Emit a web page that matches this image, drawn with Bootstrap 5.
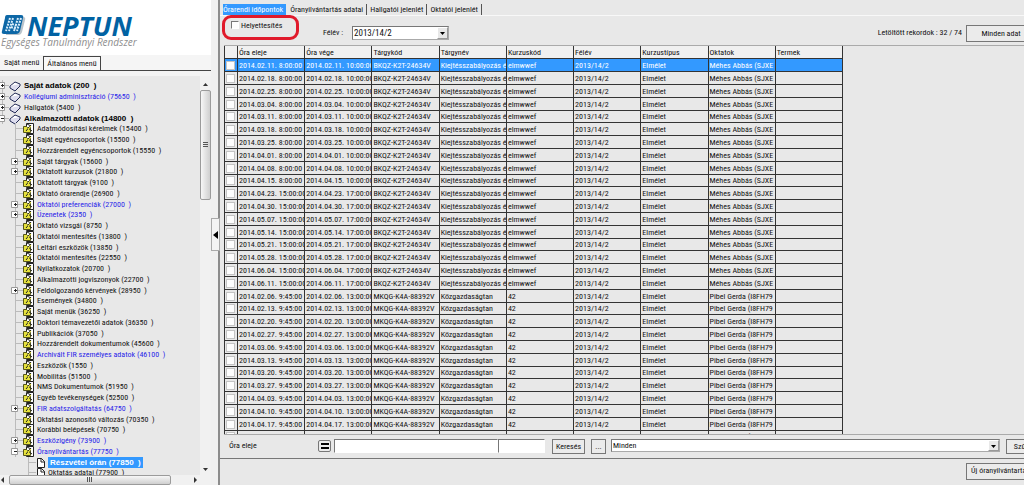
<!DOCTYPE html>
<html lang="hu">
<head>
<meta charset="utf-8">
<meta name="viewport" content="width=device-width, initial-scale=1">
<title>Neptun – Részvétel órán</title>
<link href="https://cdn.jsdelivr.net/npm/bootstrap@5.3.0/dist/css/bootstrap.min.css" rel="stylesheet">
<style>
:root { --face:#e8e8e8; --sel:#3399ff; --line:#777; --ink:#111; }
body { font-family:"Roboto Condensed","Liberation Sans",Arial,sans-serif; font-size:8px; line-height:10px; background:var(--face); color:var(--ink); }
button,input,select { font:inherit; color:inherit; border-radius:0; }
a { color:inherit; text-decoration:none; }
.side { width:211px; }
.logo { height:58px; padding:15px 0 0 1px; }
.logo-word { font:italic 700 27px/20px "Open Sans",sans-serif; color:#0062a3; }
.logo-sub { font:italic 10px/13px "Open Sans",sans-serif; color:#8f8f8f; white-space:nowrap; }
.side-tabs { background:#f5f5f5; height:17px; border-bottom:1px solid #444; margin-top:-3px; padding-left:1px; }
.side-tabs button { border:0; background:none; padding:0 3px; height:14px; }
.side-tabs button.active { border:1px solid #444; border-bottom:0; background:#f8f8f8; padding:0 3px; margin-left:1px; }
.strip { background:#f3f3f3; height:5px; }
.pane { min-height:0; }
.tree { padding-top:4px; }
.tree li { height:11px; line-height:11px; white-space:pre; display:flex; align-items:center; }
.tree li:nth-child(4n) { height:10px; }
.tree svg { flex:none; overflow:visible; }
.tree .strong { font-weight:700; font-family:"Liberation Sans",sans-serif; color:#000; }
.tree .blue { color:#2a1fe8; }
.twig { width:24px; height:11px; }
.branch { margin-left:13px; }
.leaf { margin-left:24px; }
.picked { background:var(--sel); color:#fff; font-weight:700; font-family:"Liberation Sans",sans-serif; padding:0 2px; }
.vbar { width:11px; background:#f1f1f1; }
.vthumb { height:110px; border:1px solid #9b9b9b; border-radius:2px; background:linear-gradient(90deg,#f7f7f7,#cfcfcf); }
.hbar { height:10px; background:#f1f1f1; padding-right:11px; }
.hthumb { width:162px; border:1px solid #9b9b9b; border-radius:2px; background:linear-gradient(#f7f7f7,#cfcfcf); }
.split { width:9px; background:#f0f0f0; border-right:2px solid #8c8c8c; padding-top:218px; }
.split button { width:9px; height:33px; border:1px solid #aaa; background:#f4f4f4; padding:0; display:block; }
.tabs { height:16px; border-bottom:1px solid #f8f8f8; padding:4px 0 0 3px; }
.tabs button { border:0; border-right:1px solid #555; background:none; padding:0 3px; height:11px; line-height:11px; margin-bottom:1px; }
.tabs button.active { background:var(--sel); color:#fff; padding:0 3px 0 0; border-color:var(--face); }
.filter { height:30px; padding-left:2px; }
.ring { width:77px; height:25px; border:3px solid #e01a2b; border-radius:9px; padding:3px 0 0 6px; margin-top:-1px; }
.box { appearance:none; width:9px; height:9px; margin:0; background:#fdfdfd; border:1px solid #c4c4c4; display:block; }
.ring .box { border-color:#777 #fff #fff #777; width:8px; height:8px; }
.ring label { padding-left:2px; }
.caption { margin-top:12px; white-space:nowrap; }
.combo { border:1px solid #777; border-right-color:#aaa; border-bottom-color:#aaa; background:#fff; flex:none; }
.combo select { appearance:none; border:0; background:none; padding:0 1px; outline:0; }
.combo span { width:11px; background:var(--face); border:1px solid #999; border-top-color:#fff; border-left-color:#fff; }
.btn3d { border:1px solid #777; background:#ebebeb; padding:0; white-space:nowrap; flex:none; }
.gridbox { border-top:1px solid #aaa; border-bottom:1px solid #aaa; margin-left:4px; }
.records { table-layout:fixed; width:619px; border-collapse:collapse; margin-top:-1px; }
.records th,.records td { border:1px solid #333; padding:0 0 0 1px; height:13px; line-height:11px; font-weight:400; overflow:hidden; white-space:nowrap; }
.records th { background:#f0f0f0; text-align:left; }
.records tbody tr:nth-child(5n) td { height:12px; line-height:10px; }
.records tr.on td { background:var(--sel); color:#fff; }
.records .pick { width:13px; }
.search { height:24px; padding:3px 0 0 9px; border-bottom:1px solid #777; }
.field { border:1px solid #fff; border-top-color:#777; border-left-color:#777; background:#fff; height:14px; padding:0 2px; margin-top:1px; }
.foot { height:27px; padding-top:4px; }
.term-label { width:28px; margin-left:24px; }
.term-box { width:97px; height:14px; margin:10px 0 0 1px; font-size:9px; }
.all-btn { width:70px; height:17px; margin:9px -12px 0 0; }
.q-label { width:89px; padding-top:3px; }
.eq-btn { width:13px; height:12px; margin:2px 3px 0 0; border-radius:2px; }
.q-one { width:164px; }
.q-two { width:47px; }
.find-btn { width:33px; height:15px; margin:1px 6px 0 7px; }
.more-btn { width:15px; height:15px; margin:1px 5px 0 0; }
.combo.all-box { height:13px; margin-top:1px; flex:1 1 auto; }
.sieve-btn { width:37px; height:15px; margin:1px -19px 0 6px; }
.new-btn { width:69px; height:17px; margin-right:-11px; }
</style>
</head>
<body class="vh-100 d-flex overflow-hidden">
<aside class="side d-flex flex-column flex-shrink-0">
  <header class="logo bg-white">
    <div class="d-flex align-items-center">
      <svg width="26" height="21" viewBox="0 0 26 21" aria-hidden="true">
        <path d="M7 2h15q3 0 2 3l-3 12q-1 3-4 3H5z" fill="#b9c3cb"/>
        <path d="M6 0h14q3 0 2 3l-3 13q-1 3-4 3H3q-3 0-2-3L4 3q0-3 2-3z" fill="#0d67a6"/>
        <path d="M9 3L5 16M12 3L8 16M11 9l6 2M10 12l5 2M17 3l-4 13M20 3l-4 13" stroke="#d9edfa" stroke-width="2" stroke-dasharray="2 1" fill="none"/>
      </svg>
      <span class="logo-word">NEPTUN</span>
    </div>
    <div class="logo-sub">Egységes Tanulmányi Rendszer</div>
  </header>
  <nav class="side-tabs d-flex align-items-end"><button type="button">Saját menü</button><button type="button" class="active">Általános menü</button></nav>
  <div class="strip"></div>
  <div class="pane d-flex flex-grow-1 overflow-hidden">
    <ul class="tree list-unstyled mb-0 flex-grow-1 overflow-hidden" id="tree"></ul>
    <div class="vbar d-flex flex-column">
      <svg width="11" height="14" aria-hidden="true"><path d="M3 10l2.500-3 2.500 3z" fill="#333"/></svg>
      <div class="vthumb d-flex align-items-center justify-content-center"><svg width="5" height="6"><path d="M0 .5h5M0 2.500h5M0 4.500h5" stroke="#555"/></svg></div>
      <svg class="mt-auto" width="11" height="9" aria-hidden="true"><path d="M3 2l2.500 3L8 2z" fill="#333"/></svg>
    </div>
  </div>
  <div class="hbar d-flex align-items-stretch">
    <svg width="9" height="10" aria-hidden="true"><path d="M4 2L1 5l3 3z" fill="#333"/></svg>
    <div class="hthumb d-flex align-items-center justify-content-center"><svg width="6" height="5"><path d="M.5 0v5M2.500 0v5M4.500 0v5" stroke="#555"/></svg></div>
    <svg class="ms-auto" width="9" height="10" aria-hidden="true"><path d="M3 2l3 3-3 3z" fill="#333"/></svg>
  </div>
</aside>
<div class="split flex-shrink-0"><button type="button" aria-label="Menü elrejtése"><svg width="7" height="31" class="d-block"><path d="M6 12v8L1 16z" fill="#000"/></svg></button></div>
<main class="flex-grow-1 d-flex flex-column overflow-hidden">
  <nav class="tabs d-flex">
    <button type="button" class="active">Órarendi időpontok</button><button type="button">Óranyilvántartás adatai</button><button type="button">Hallgatói jelenlét</button><button type="button">Oktatói jelenlét</button>
  </nav>
  <div class="filter d-flex">
    <div class="ring d-flex flex-shrink-0"><input class="box" type="checkbox" id="subst"><label for="subst">Helyettesítés</label></div>
    <label class="caption term-label" for="term">Félév :</label>
    <div class="combo d-flex term-box"><select id="term" class="flex-grow-1"><option>2013/14/2</option></select><span class="d-flex"><svg width="9" height="10"><path d="M2 4h5L4.500 7z" fill="#000"/></svg></span></div>
    <div class="caption ms-auto pe-1">Letöltött rekordok : 32 / 74</div>
    <button type="button" class="btn3d all-btn">Minden adat</button>
  </div>
  <div class="gridbox flex-grow-1 overflow-hidden">
    <table class="records">
      <colgroup><col class="pick"><col><col><col><col><col><col><col><col><col></colgroup>
      <thead><tr><th></th><th>Óra eleje</th><th>Óra vége</th><th>Tárgykód</th><th>Tárgynév</th><th>Kurzuskód</th><th>Félév</th><th>Kurzustípus</th><th>Oktatok</th><th>Termek</th></tr></thead>
      <tbody id="rows"></tbody>
    </table>
  </div>
  <form class="search d-flex align-items-start">
    <label for="q1" class="q-label">Óra eleje</label>
    <button type="button" class="btn3d eq-btn" aria-label="Egyenlő"><svg width="10" height="10" class="d-block mx-auto"><path d="M1 3h8M1 7h8" stroke="#000" stroke-width="2"/></svg></button>
    <input id="q1" class="field q-one" type="text"><input class="field q-two" type="text" aria-label="Óra eleje, vég">
    <button type="button" class="btn3d find-btn">Keresés</button>
    <button type="button" class="btn3d more-btn">...</button>
    <div class="combo d-flex all-box"><select class="flex-grow-1" aria-label="Szűrő"><option>Minden</option></select><span class="d-flex"><svg width="9" height="9"><path d="M2 4h5L4.500 7z" fill="#000"/></svg></span></div>
    <button type="button" class="btn3d sieve-btn">Szűrés</button>
  </form>
  <footer class="foot d-flex justify-content-end"><button type="button" class="btn3d new-btn">Új óranyilvántartás</button></footer>
</main>
<script>
// kind: r = root, R = bold root, c = child, l = leaf, s = selected leaf; then toggle mark, label, blue flag
const items = [
 ['R','+','Saját adatok (200  )'],['r','+','Kollégiumi adminisztráció (75650  )',1],['r','+','Hallgatók (5400  )'],['R','-','Alkalmazotti adatok (14800  )'],
 ['c','','Adatmódosítási kérelmek (15400  )'],['c','','Saját egyéncsoportok (15500  )'],['c','','Hozzárendelt egyéncsoportok (15550  )'],['c','+','Saját tárgyak (15600  )'],
 ['c','+','Oktatott kurzusok (21800  )'],['c','','Oktatott tárgyak (9100  )'],['c','','Oktató órarendje (26900  )'],['c','+','Oktatói preferenciák (27000  )',1],
 ['c','+','Üzenetek (2350  )',1],['c','','Oktató vizsgái (8750  )'],['c','','Oktatói mentesítés (13800  )'],['c','','Leltári eszközök (13850  )'],
 ['c','','Oktatói mentesítés (22550  )'],['c','','Nyilatkozatok (20700  )'],['c','','Alkalmazotti jogviszonyok (22700  )'],['c','+','Feldolgozandó kérvények (28950  )'],
 ['c','','Események (34800  )'],['c','','Saját menük (36250  )'],['c','','Doktori témavezetői adatok (36350  )'],['c','','Publikációk (37050  )'],
 ['c','','Hozzárendelt dokumentumok (45600  )'],['c','','Archivált FIR személyes adatok (46100  )',1],['c','','Eszközök (1550  )'],['c','','Mobilitás (51500  )'],
 ['c','','NMS Dokumentumok (51950  )'],['c','','Egyéb tevékenységek (52500  )'],['c','+','FIR adatszolgáltatás (64750  )',1],['c','','Oktatási azonosító változás (70350  )'],
 ['c','','Korábbi belépések (70750  )'],['c','+','Eszközigény (73900  )',1],['c','-','Óranyilvántartás (77750  )',1],['s','','Részvétel órán (77850  )'],['l','','Oktatás adatai (77900  )']];
const mark = (m, x) => m ? `<path d="M${x-3}.5 2.500h6v6h-6z" fill="#fff" stroke="#999"/><path d="M${x-1} 5.500h3${m=='+'?`M${x}.5 4v3`:''}" stroke="#222"/>` : '';
const book = '<path d="M10 6l5-4 5 2-5 5z" fill="#fff" stroke="#222a55"/><path d="M10 6v2l5 3 5-5V4" fill="#dde" stroke="#222a55"/>';
const folder = '<path d="M13.500 .5h7v10h-7z" fill="#fff" stroke="#222"/><path d="M10.500 3.500h3l1 1h3v5h-7z" fill="#e6e23c" stroke="#55551a"/><path d="M13 8l5-6M15 5l4 3M14 1l4 2" stroke="#222"/><path d="M15 6l3-3" stroke="#e6e23c"/>';
const page = '<path d="M13.500 1.500h4l3 3v6h-7z" fill="#fff" stroke="#222"/><path d="M17 1v4h4" fill="none" stroke="#222"/>';
document.getElementById('tree').innerHTML = items.map(([k, m, t, b]) => {
  const root = k == 'R' || k == 'r', kid = k == 'c';
  const line = root ? '<path d="M2.500 0v11M2 5.500h7" stroke="#bbb"/>' : kid ? '<path d="M2.500 0v11M3 5.500h7" stroke="#bbb"/>' : '<path d="M4.500 0v11M4 5.500h8" stroke="#bbb"/>';
  const cls = k == 'R' ? 'strong' : k == 's' ? 'picked' : b ? 'blue' : '';
  return `<li><svg class="twig ${root ? '' : kid ? 'branch' : 'leaf'}" viewBox="0 0 24 11" aria-hidden="true">${line}${mark(m, 2)}${root ? book : kid ? folder : page}</svg><a href="#" class="${cls}">${t}</a></li>`;
}).join('');
const A = ['BKQZ-K2T-24634V','Kiejtésszabályozás é','elmwwef','2013/14/2','Elmélet','Méhes Abbás (SJXE'], B = ['MKQG-K4A-88392V','Közgazdaságtan','42','2013/14/2','Elmélet','Pibel Gerda (I8FH79'];
const groups = [['02.11 02.18 02.25 03.04 03.11 03.18 03.25 04.01 04.08 04.15','8:00:00','10:00:00',A],
 ['04.23 04.30 05.07 05.14 05.21 05.28 06.04 06.11','15:00:00','17:00:00',A],
 ['02.06 02.13 02.20 02.27 03.06 03.13 03.20 03.27 04.03 04.10 04.17 04.24','9:45:00','13:00:00',B]];
document.getElementById('rows').innerHTML = groups.flatMap(([days, from, to, rest]) => days.split(' ').map(d =>
  [`2014.${d}. ${from}`, `2014.${d}. ${to}`, ...rest, ''])).map((r, i) =>
  `<tr class="${i ? '' : 'on'}"><td><input class="box" type="checkbox" aria-label="Sor ${i + 1}"></td>${r.map(c => `<td>${c}</td>`).join('')}</tr>`).join('');
</script>
<script src="https://cdn.jsdelivr.net/npm/bootstrap@5.3.0/dist/js/bootstrap.bundle.min.js"></script>
</body>
</html>
